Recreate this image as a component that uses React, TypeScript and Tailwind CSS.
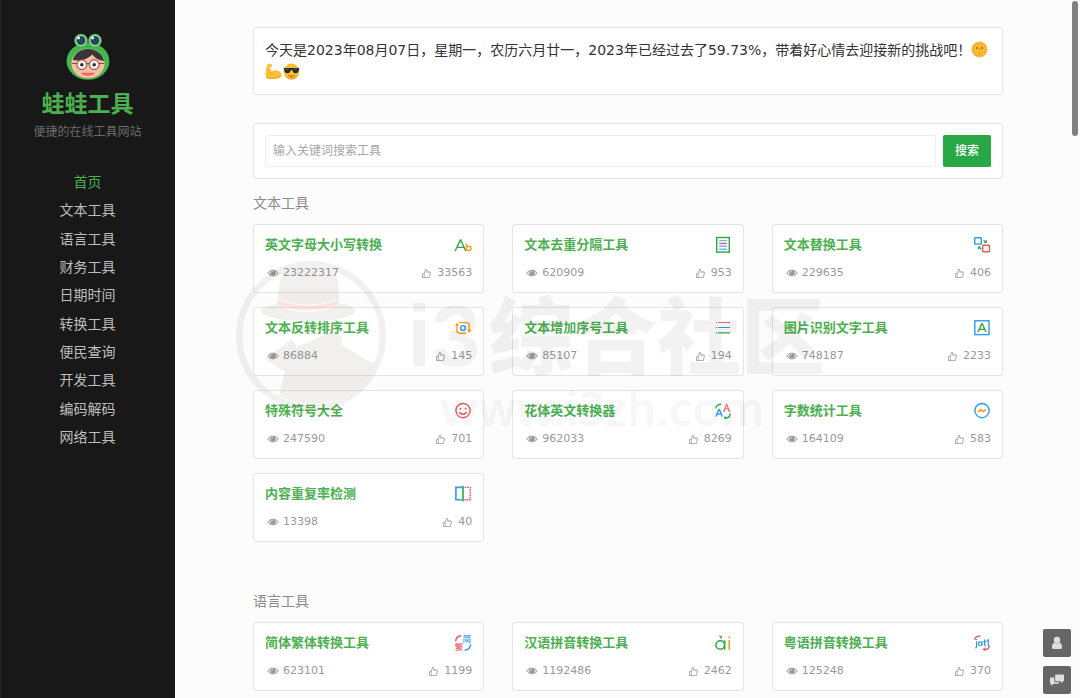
import React from "react";
import { AiOutlineLike } from "react-icons/ai";

const GREEN = "#2aa745";
const ORANGE = "#ff9a1a";
const BLUE = "#2e9bef";
const RED = "#f0575c";

type IconProps = { children: React.ReactNode };

function ToolIcon({ children }: IconProps) {
  return (
    <svg viewBox="0 0 18 18" className="h-[18px] w-[18px] shrink-0" fill="none" strokeWidth="1.4" aria-hidden="true">
      {children}
    </svg>
  );
}

const icons: Record<string, React.ReactNode> = {
  case: (
    <>
      <path d="M1.2 15 6.3 4h.4l5 11M3 11.4h7" stroke={GREEN} />
      <path d="M12.4 7.6v7.2M12.4 12.4a2.2 2.2 0 1 1 4.5 0 2.2 2.2 0 0 1-4.5 0z" stroke={ORANGE} />
    </>
  ),
  dedupe: (
    <>
      <rect x="2.7" y="1.500" width="12.600" height="14.600" stroke={GREEN} />
      <path d="M5.200 4.600h7.600M5.200 10.300h7.600M5.200 13.200h7.600" stroke={BLUE} strokeOpacity=".7" />
      <path d="M5.200 7.500h7.600" stroke={RED} />
    </>
  ),
  replace: (
    <>
      <rect x="1.7" y="1.700" width="6.600" height="6.400" rx=".6" stroke={BLUE} />
      <rect x="9.700" y="9.300" width="6.800" height="6.400" rx=".6" stroke={RED} />
      <path d="m10.600 4.200 1.400 1" stroke={GREEN} />
      <path d="M13.900 3.700v3.300h-3.400zM4.800 13.900v-3.300h3.400z" fill={GREEN} />
      <path d="m8.300 13.200-1.500-1" stroke={GREEN} />
    </>
  ),
  reverse: (
    <>
      <path d="M3 5v6.6a2.6 2.6 0 0 0 2.6 2.6H12M5.2 3.6h7.4a2.6 2.6 0 0 1 2.6 2.6V12" stroke={ORANGE} />
      <path d="M.8 6.8 3 3.8l2.2 3zM13 10.8l2.2 3 2.2-3z" fill={ORANGE} />
      <circle cx="9" cy="9" r="2.4" stroke={BLUE} />
    </>
  ),
  list: (
    <>
      <path d="M1.8 3.5h1.2M4.2 3.5h12" stroke={RED} strokeWidth="1.200" strokeOpacity=".85" />
      <path d="M1.8 8.500h1.2M4.2 8.500h12" stroke={BLUE} strokeWidth="1.200" />
      <path d="M1.8 13.800h1.2M4.2 13.800h12" stroke={GREEN} strokeWidth="1.200" />
    </>
  ),
  ocr: (
    <>
      <rect x="1.8" y="1.8" width="14.2" height="13.8" stroke={BLUE} />
      <path d="m5 13 3.8-8.4h.4L13 13M6.2 10.4h5.6" stroke={GREEN} />
    </>
  ),
  smile: (
    <>
      <circle cx="9" cy="8.600" r="7.1" stroke={RED} />
      <path d="M5.5 9.900c.5 3.200 6.5 3.200 7 0" stroke={RED} />
      <circle cx="6.3" cy="6.700" r="1" fill={RED} />
      <circle cx="11.7" cy="6.700" r="1" fill={RED} />
    </>
  ),
  fancy: (
    <>
      <path d="m2 14.6 3-7.2h.4l3 7.2M3 12.1h4.4" stroke={BLUE} />
      <path d="m10 9 2.6-7 2.8 7M11 6.8h3.6M9 9h2M14.2 9h2.2" stroke={RED} strokeWidth="1" />
      <path d="M2 6.2C2 3.6 4.2 2.1 7.2 2.2M16.2 11.4c0 3-2 4.6-5.4 4.6" stroke={GREEN} />
      <path d="m9.5 16 2.4-2v3.6z" fill={GREEN} />
    </>
  ),
  count: (
    <>
      <circle cx="9" cy="8.600" r="7.1" stroke={BLUE} />
      <path d="M5.2 10 7.6 7.600l2.6 2 2.8-2.200" stroke={ORANGE} strokeWidth="1.6" />
    </>
  ),
  repeat: (
    <>
      <path d="M8 2.4H1.9v12.4H8" stroke={BLUE} strokeWidth="1.6" />
      <path d="M9 .8v15.8" stroke={GREEN} strokeWidth="1.6" />
      <path d="M10.5 2.4h5.700v12.400h-5.700" stroke={RED} strokeDasharray="1.7 .8" />
    </>
  ),
  hanzi: (
    <>
      <path d="M1.600 7.200C1.800 4.200 4 2 7.200 1.700" stroke={RED} />
      <path d="M16.600 10.200c-.3 3.200-2.600 5.700-6 6" stroke={BLUE} />
      <text x="8.600" y="8.400" fontSize="8.500" fontWeight="500" fill={BLUE} stroke="none">
        简
      </text>
      <text x=".8" y="15.900" fontSize="8.500" fontWeight="500" fill={RED} stroke="none">
        繁
      </text>
    </>
  ),
  pinyin: (
    <>
      <circle cx="6.200" cy="11" r="4.300" stroke={GREEN} strokeWidth="1.5" />
      <path d="M10.700 6.300v9.400M5.600 1.700l2.200 2.600" stroke={GREEN} strokeWidth="1.5" />
      <path d="M15.200 6.200v9.500M15.200 2.400v1.900" stroke={ORANGE} strokeWidth="1.6" />
    </>
  ),
  jyut: (
    <>
      <path d="M1.8 6C1.8 3.2 4.4 1.6 7.6 2.3M16.3 11.6c0 2.9-2.6 4.6-5.8 3.8" stroke={RED} />
      <path d="m9.5 15.3 2.6-2v3.8z" fill={RED} />
      <path d="M3.6 7.2v5.2c0 1-.5 1.4-1.4 1.4M3.6 5v1.1M9 7.4v4.4M11.6 5.4v5.2c0 .8.4 1.2 1.4 1.1M10.4 7.6h2.8M13.8 6.8l1.5-.9v6" stroke={BLUE} strokeWidth="1.2" />
      <circle cx="7.2" cy="9.7" r="1.8" stroke={BLUE} strokeWidth="1.2" />
    </>
  ),
};

type Tool = { name: string; views: string; likes: string; icon: string };

const textTools: Tool[] = [
  { name: "英文字母大小写转换", views: "23222317", likes: "33563", icon: "case" },
  { name: "文本去重分隔工具", views: "620909", likes: "953", icon: "dedupe" },
  { name: "文本替换工具", views: "229635", likes: "406", icon: "replace" },
  { name: "文本反转排序工具", views: "86884", likes: "145", icon: "reverse" },
  { name: "文本增加序号工具", views: "85107", likes: "194", icon: "list" },
  { name: "图片识别文字工具", views: "748187", likes: "2233", icon: "ocr" },
  { name: "特殊符号大全", views: "247590", likes: "701", icon: "smile" },
  { name: "花体英文转换器", views: "962033", likes: "8269", icon: "fancy" },
  { name: "字数统计工具", views: "164109", likes: "583", icon: "count" },
  { name: "内容重复率检测", views: "13398", likes: "40", icon: "repeat" },
];

const languageTools: Tool[] = [
  { name: "简体繁体转换工具", views: "623101", likes: "1199", icon: "hanzi" },
  { name: "汉语拼音转换工具", views: "1192486", likes: "2462", icon: "pinyin" },
  { name: "粤语拼音转换工具", views: "125248", likes: "370", icon: "jyut" },
];

const menu = [
  "首页",
  "文本工具",
  "语言工具",
  "财务工具",
  "日期时间",
  "转换工具",
  "便民查询",
  "开发工具",
  "编码解码",
  "网络工具",
];

function EyeIcon() {
  return (
    <svg viewBox="0 0 12 10" className="h-[10px] w-[12px]" aria-hidden="true">
      <path d="M.7 5C3.200 1.200 8.800 1.200 11.300 5 8.800 8.800 3.200 8.800.7 5z" fill="#999" fillOpacity=".25" stroke="#999" strokeWidth=".9" />
      <circle cx="6" cy="4.7" r="2.7" fill="#999" />
      <path d="M4.400 4.600A1.600 1.600 0 0 1 6 3" fill="none" stroke="#fff" strokeWidth=".6" />
    </svg>
  );
}

function ToolCard({ tool }: { tool: Tool }) {
  return (
    <a href="#" className="block rounded-[3px] border border-[#e4e4e4] bg-white px-[11px] pt-[10px] pb-[11px]">
      <div className="flex h-5 items-center justify-between">
        <h3 className="text-[13px] leading-5 font-bold text-[#4caf50]">{tool.name}</h3>
        <ToolIcon>{icons[tool.icon]}</ToolIcon>
      </div>
      <div className="mt-[10px] flex h-4 items-center justify-between text-[11px] leading-4 text-[#999]">
        <span className="flex items-center gap-1 pl-[2px]">
          <EyeIcon />
          {tool.views}
        </span>
        <span className="flex items-center gap-[5px]">
          <AiOutlineLike className="h-[11px] w-[11px]" aria-hidden="true" />
          {tool.likes}
        </span>
      </div>
    </a>
  );
}

function ToolSection({ title, tools }: { title: string; tools: Tool[] }) {
  return (
    <section>
      <h2 className="mb-[11px] text-sm leading-5 text-[#8c8c8c]">{title}</h2>
      <div className="grid grid-cols-3 gap-x-7 gap-y-[14px]">
        {tools.map((tool) => (
          <ToolCard key={tool.name} tool={tool} />
        ))}
      </div>
    </section>
  );
}

function FrogLogo() {
  return (
    <svg viewBox="0 0 44 48" className="h-12 w-11" role="img" aria-label="蛙蛙工具">
      <ellipse cx="22" cy="29.2" rx="21.4" ry="18.6" fill="#43b94c" />
      <circle cx="15" cy="8.500" r="6.8" fill="#43b94c" />
      <circle cx="29" cy="8.500" r="6.8" fill="#43b94c" />
      <circle cx="15" cy="8.500" r="5.6" fill="#c4dcdc" />
      <circle cx="29" cy="8.500" r="5.6" fill="#c4dcdc" />
      <circle cx="15" cy="8.500" r="4.5" fill="#204c50" />
      <circle cx="29" cy="8.500" r="4.5" fill="#204c50" />
      <circle cx="12.600" cy="6" r="1.400" fill="#fff" />
      <circle cx="26.600" cy="6" r="1.400" fill="#fff" />
      <path d="M20.500 14.500h1M23 14.500h1" stroke="#176b22" strokeWidth=".8" />
      <ellipse cx="22" cy="31.500" rx="16.600" ry="14.700" fill="#f8bda6" />
      <path d="M6.800 28C8.600 21 14.500 16.900 22 16.900c8 0 14.500 4.800 16.200 12-5-.5-9.200-2.600-12-6.500C22 27 14 29.600 6.800 28z" fill="#393638" />
      <path d="M5.700 31.500h5M33 31.500h5.300M20.600 31.600h2.800" stroke="#5b3430" strokeWidth=".8" />
      <circle cx="15.800" cy="32.700" r="5" fill="#f9cdb9" stroke="#5b3430" strokeWidth=".8" />
      <circle cx="28.200" cy="32.700" r="5" fill="#f9cdb9" stroke="#5b3430" strokeWidth=".8" />
      <circle cx="15.800" cy="32.700" r="3.200" fill="#fff" />
      <circle cx="28.200" cy="32.700" r="3.200" fill="#fff" />
      <circle cx="15.800" cy="32.700" r="1.800" fill="#25363b" />
      <circle cx="28.200" cy="32.700" r="1.800" fill="#25363b" />
      <path d="M15.300 40.800h13.400c-.8 3.800-12.600 3.800-13.400 0z" fill="#fb6565" />
    </svg>
  );
}

function SunFace() {
  return (
    <svg viewBox="0 0 18 18" className="inline-block h-[17px] w-[17px] align-[-3px]" role="img" aria-label="🌞">
      <circle cx="9" cy="9" r="7.8" fill="#f5a51c" stroke="#f7b22e" strokeWidth="1.6" strokeDasharray="1.4 1" />
      <circle cx="9" cy="9" r="6.6" fill="#fbbb35" />
      <ellipse cx="6.3" cy="7.4" rx="1.1" ry=".8" fill="#7a4a14" />
      <ellipse cx="11.7" cy="7.4" rx="1.1" ry=".8" fill="#7a4a14" />
      <path d="M9 7.4v2.8M7.4 12.4c1 .7 2.2.7 3.2 0" stroke="#d18416" strokeWidth=".9" fill="none" />
    </svg>
  );
}

function Muscle() {
  return (
    <svg viewBox="0 0 18 18" className="mr-px inline-block h-[17px] w-[17px] align-[-3px]" role="img" aria-label="💪">
      <path
        d="M2.4 2.3C3.2.8 5 .5 6.5 1.2c1 .5 1.3 1.7.7 2.5-.5.8-1.5.7-2 .6.3 2 .8 3.6 1.6 4.9C8.300 7.600 11 7.100 13.400 8c2.800 1 4.400 3.400 4.100 5.400-.3 2.200-4.500 3.500-9.500 3.500-3.500 0-6.500-.6-6.900-1.700C.300 12.500 1.100 5 2.400 2.300z"
        fill="#fbbf35"
      />
      <path d="M6.800 9.200c-.9 1-1.400 2-1.200 3M1.200 15.200c3 1.600 12 1.500 15-1" stroke="#e5971b" strokeWidth=".8" fill="none" />
    </svg>
  );
}

function CoolFace() {
  return (
    <svg viewBox="0 0 18 18" className="inline-block h-[17px] w-[17px] align-[-3px]" role="img" aria-label="😎">
      <circle cx="9" cy="9" r="8.400" fill="#fbc02f" />
      <path d="M2 13.600a8.400 8.400 0 0 0 14 0c-4 2.600-10 2.600-14 0z" fill="#f09f22" />
      <path d="M.7 5.400h16.600l-.4 1.400c-.5 3-1.700 4-3.700 4-2.100 0-3-1.500-3.500-3.500H8.300c-.5 2-1.400 3.500-3.500 3.500-2 0-3.200-1-3.700-4z" fill="#222a30" />
      <path d="M2.500 6.600h3.600M11 6.600h3.600" stroke="#77838a" strokeWidth=".7" />
      <path d="M5.700 13c2 1.600 4.800 1.500 6.600-.2" stroke="#87480f" strokeWidth="1" fill="none" />
    </svg>
  );
}

function Watermark() {
  return (
    <div aria-hidden="true" className="pointer-events-none absolute top-[260px] left-[235px] h-[176px] w-[600px]">
      <svg viewBox="0 0 152 152" className="absolute top-0 left-0 h-[152px] w-[152px]">
        <path
          fillRule="evenodd"
          fill="#000"
          fillOpacity=".055"
          d="M76 1a75 75 0 1 0 0 150A75 75 0 0 0 76 1zm0 6.500a68.500 68.500 0 1 1 0 137 68.500 68.500 0 0 1 0-137z"
        />
        <g fill="#403818" fillOpacity=".075">
          <path d="M43 38C44 25 45 17 48 13 60 6 90 6 100 13c3 6 4 15 4 25-18 9-44 8-61 0z" />
          <path d="M42 45c18 9 45 9 63-1 9 1 15 4 15 7 0 6-20 10-47 10S26 57 26 51c0-3 7-6 16-6z" />
          <path d="M44 135.500 50 112 30 99 57 79l5 8 36-16 9 6-1 8 33 19A68.500 68.500 0 0 1 44 135.500z" />
        </g>
        <path d="M43 39c17 8 43 9 61 0v5c-18 9-44 8-62 1z" fill="#ff6950" fillOpacity=".16" />
      </svg>
      <span className="absolute top-[32px] left-[172px] font-['Liberation_Sans',sans-serif] text-[88px] leading-[88px] font-bold text-black/5">
        i3
      </span>
      <span className="absolute top-[32px] left-[254px] font-['Noto_Sans_CJK_SC',sans-serif] text-[84px] leading-[80px] font-black whitespace-nowrap text-black/5">
        综合社区
      </span>
      <span className="absolute top-[120px] left-[205px] font-['Noto_Sans',sans-serif] text-[46px] leading-[56px] font-semibold whitespace-nowrap text-black/5">
        www.i3zh.com
      </span>
    </div>
  );
}

export default function App() {
  return (
    <div className="relative flex min-h-screen bg-[#fcfcfc] font-['DejaVu_Sans','Noto_Sans_CJK_SC',sans-serif]">
      <aside className="flex w-[175px] shrink-0 flex-col items-center bg-[#181818] pt-8 shadow-[inset_1px_0_0_#262626]">
        <FrogLogo />
        <h1 className="mt-[8px] text-[23px] leading-8 font-bold text-[#4caf50]">蛙蛙工具</h1>
        <p className="mt-[2px] text-xs leading-5 text-[#6c6c6c]">便捷的在线工具网站</p>
        <nav className="mt-[26px] grid h-[283px] auto-rows-fr items-center text-center text-sm">
          {menu.map((item, i) => (
            <a key={item} href="#" className={i === 0 ? "text-[#4caf50]" : "text-[#bdbdbd]"}>
              {item}
            </a>
          ))}
        </nav>
      </aside>

      <main className="min-w-0 flex-1 pt-[27px] pr-[77px] pb-[7px] pl-[78px]">
        <p className="rounded-[3px] border border-[#e4e4e4] bg-white px-[11px] pt-[11px] pb-[11px] text-sm leading-[22px] text-[#333]">
          今天是2023年08月07日，星期一，农历六月廿一，2023年已经过去了59.73%，带着好心情去迎接新的挑战吧！
          <SunFace />
          <Muscle />
          <CoolFace />
        </p>

        <form
          className="mt-7 mb-[14px] flex gap-[7px] rounded-[3px] border border-[#e4e4e4] bg-white p-[11px]"
          onSubmit={(e) => e.preventDefault()}
        >
          <input
            type="text"
            aria-label="输入关键词搜索工具"
            placeholder="输入关键词搜索工具"
            className="h-8 min-w-0 flex-1 rounded-[2px] border border-[#eee] bg-white px-[7px] text-xs text-[#333] outline-none placeholder:text-[#a6a6a6]"
          />
          <button type="submit" className="h-8 w-12 shrink-0 rounded-[2px] bg-[#28a745] text-xs font-medium text-white">
            搜索
          </button>
        </form>

        <div className="flex flex-col gap-[49px]">
          <ToolSection title="文本工具" tools={textTools} />
          <ToolSection title="语言工具" tools={languageTools} />
        </div>
      </main>

      <Watermark />

      <div className="fixed right-[9px] bottom-1 flex flex-col gap-[9px]">
        <button type="button" aria-label="用户" className="flex h-7 w-7 items-center justify-center rounded-[2px] bg-[#666]">
          <svg viewBox="0 0 14 14" className="h-[14px] w-[14px]" fill="#dedede" aria-hidden="true">
            <circle cx="7" cy="4" r="3.200" />
            <path d="M4.300 6.600C2.800 7.500 2 9 2 11.200c0 1.300.7 1.800 2 1.800h6c1.300 0 2-.5 2-1.800 0-2.200-.8-3.700-2.300-4.600-1.500 1.300-3.900 1.300-5.400 0z" />
          </svg>
        </button>
        <button type="button" aria-label="留言" className="flex h-7 w-7 items-center justify-center rounded-[2px] bg-[#666]">
          <svg viewBox="0 0 14 14" className="h-[14px] w-[14px]" fill="#dedede" aria-hidden="true">
            <path d="M6 1.500h7.200c.5 0 .8.300.8.800v5.200c0 .5-.3.800-.8.800h-.6v2l-2.300-2H6c-.5 0-.8-.3-.8-.8V2.300c0-.5.3-.8.8-.8z" />
            <path d="M4.300 4.500H.8c-.5 0-.8.300-.8.800v4.600c0 .5.300.8.800.8h.5v2.200l2.500-2.200h4.400c.5 0 .8-.3.800-.8v-.7H5.500c-.8 0-1.200-.4-1.200-1.200z" />
          </svg>
        </button>
      </div>
      <div aria-hidden="true" className="fixed top-px right-[2px] h-[135px] w-[6px] rounded-full bg-[#808080]" />
    </div>
  );
}
